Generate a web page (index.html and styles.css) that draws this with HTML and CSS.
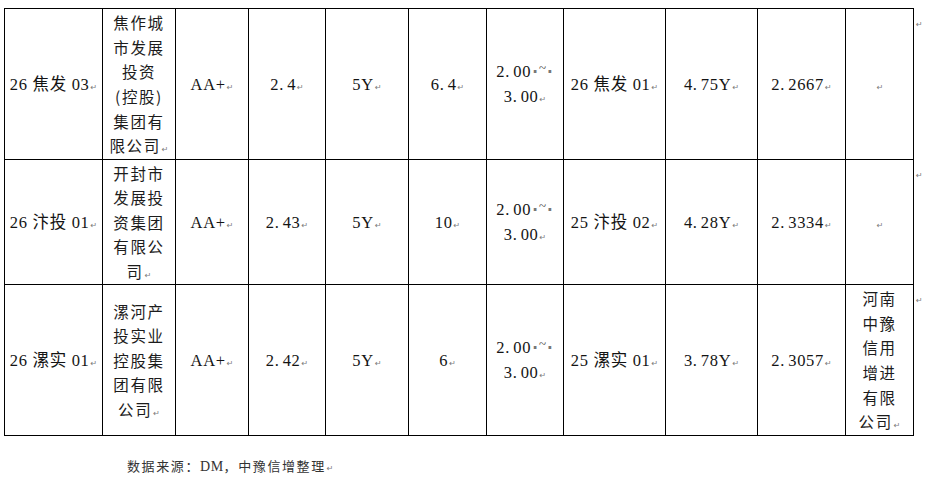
FILE: index.html
```html
<!DOCTYPE html>
<html lang="zh-CN">
<head>
<meta charset="utf-8">
<title>债券对比表</title>
<link rel="stylesheet" href="styles.css">
</head>
<body>
<div class="page">
  <table class="bonds">
    <colgroup>
      <col class="w98"><col class="w73"><col class="w73"><col class="w77"><col class="w83"><col class="w78"><col class="w77"><col class="w102"><col class="w92"><col class="w88"><col class="w68"><col class="w12">
    </colgroup>
    <tbody>
      <tr class="r6">
        <td>26 焦发 03<span class="pm">↵</span></td>
        <td class="cn">焦作城<br>市发展<br>投资<br>(控股)<br>集团有<br>限公司<span class="pm">↵</span></td>
        <td>AA+<span class="pm">↵</span></td>
        <td>2<span class="p">.</span>4<span class="pm">↵</span></td>
        <td>5Y<span class="pm">↵</span></td>
        <td>6<span class="p">.</span>4<span class="pm">↵</span></td>
        <td>2<span class="p">.</span>00<span class="sp">·</span><span class="tl">~</span><span class="sp">·</span><br>3<span class="p">.</span>00<span class="pm">↵</span></td>
        <td>26 焦发 01<span class="pm">↵</span></td>
        <td>4<span class="p">.</span>75Y<span class="pm">↵</span></td>
        <td>2<span class="p">.</span>2667<span class="pm">↵</span></td>
        <td><span class="pm">↵</span></td>
        <td class="end"><span class="rm">↵</span></td>
      </tr>
      <tr class="r5">
        <td>26 汴投 01<span class="pm">↵</span></td>
        <td class="cn">开封市<br>发展投<br>资集团<br>有限公<br>司<span class="pm">↵</span></td>
        <td>AA+<span class="pm">↵</span></td>
        <td>2<span class="p">.</span>43<span class="pm">↵</span></td>
        <td>5Y<span class="pm">↵</span></td>
        <td>10<span class="pm">↵</span></td>
        <td>2<span class="p">.</span>00<span class="sp">·</span><span class="tl">~</span><span class="sp">·</span><br>3<span class="p">.</span>00<span class="pm">↵</span></td>
        <td>25 汴投 02<span class="pm">↵</span></td>
        <td>4<span class="p">.</span>28Y<span class="pm">↵</span></td>
        <td>2<span class="p">.</span>3334<span class="pm">↵</span></td>
        <td><span class="pm">↵</span></td>
        <td class="end"><span class="rm">↵</span></td>
      </tr>
      <tr class="r6">
        <td>26 漯实 01<span class="pm">↵</span></td>
        <td class="cn">漯河产<br>投实业<br>控股集<br>团有限<br>公司<span class="pm">↵</span></td>
        <td>AA+<span class="pm">↵</span></td>
        <td>2<span class="p">.</span>42<span class="pm">↵</span></td>
        <td>5Y<span class="pm">↵</span></td>
        <td>6<span class="pm">↵</span></td>
        <td>2<span class="p">.</span>00<span class="sp">·</span><span class="tl">~</span><span class="sp">·</span><br>3<span class="p">.</span>00<span class="pm">↵</span></td>
        <td>25 漯实 01<span class="pm">↵</span></td>
        <td>3<span class="p">.</span>78Y<span class="pm">↵</span></td>
        <td>2<span class="p">.</span>3057<span class="pm">↵</span></td>
        <td class="cn">河南<br>中豫<br>信用<br>增进<br>有限<br>公司<span class="pm">↵</span></td>
        <td class="end"><span class="rm">↵</span></td>
      </tr>
    </tbody>
  </table>
  <p class="note">数据来源：<span class="lat">DM</span>，中豫信增整理<span class="pm">↵</span></p>
</div>
</body>
</html>
```

FILE: styles.css
```css
html, body {
  margin: 0;
  padding: 0;
  background: #ffffff;
}

body {
  color: #141414;
  font-family: "Liberation Serif", "Noto Sans CJK SC", serif;
}

.page {
  padding: 8px 0 0 4px;
}

.bonds {
  border-collapse: collapse;
  table-layout: fixed;
  width: 922px;
}

.w98 { width: 98px; }
.w73 { width: 73px; }
.w77 { width: 77px; }
.w83 { width: 83px; }
.w78 { width: 78px; }
.w102 { width: 102px; }
.w92 { width: 92px; }
.w88 { width: 88px; }
.w68 { width: 68px; }
.w12 { width: 12px; }

.r6 { height: 151px; }
.r5 { height: 125px; }

.bonds td {
  border: 1px solid #000;
  padding: 0;
  text-align: center;
  vertical-align: middle;
  font-size: 16.5px;
  line-height: 25px;
  letter-spacing: 0.7px;
  white-space: nowrap;
  overflow: hidden;
}

.bonds td.cn {
  font-family: "Noto Sans CJK SC", sans-serif;
  font-size: 15.5px;
  line-height: 24.6px;
  letter-spacing: 1.6px;
  color: #1c1c1c;
}

.bonds td.end {
  border: none;
  vertical-align: top;
  text-align: left;
  padding-left: 2px;
  overflow: visible;
}

.p {
  display: inline-block;
  width: 8px;
  text-align: left;
  line-height: 1;
}

.pm {
  font-family: "DejaVu Sans", sans-serif;
  font-size: 8px;
  line-height: 1;
  color: #7a7a7a;
  letter-spacing: 0;
  margin-left: 1px;
}

.rm {
  display: inline-block;
  font-family: "DejaVu Sans", sans-serif;
  font-size: 8px;
  line-height: 1;
  color: #7a7a7a;
  letter-spacing: 0;
  margin-top: 8px;
}

.sp {
  font-family: "DejaVu Sans", sans-serif;
  color: #777;
  font-size: 15px;
  font-weight: bold;
  line-height: 1;
  letter-spacing: 0;
  padding: 0 1px;
}

.tl {
  font-size: 13px;
  line-height: 1;
  letter-spacing: 0;
  vertical-align: 5px;
  color: #333;
}

.note {
  margin: 20px 0 0 123px;
  font-family: "Noto Sans CJK SC", sans-serif;
  font-size: 13px;
  letter-spacing: 1.6px;
  line-height: 20px;
  color: #333;
}

.note .lat {
  font-family: "Liberation Serif", serif;
  font-size: 14px;
  letter-spacing: 0.5px;
}
```
